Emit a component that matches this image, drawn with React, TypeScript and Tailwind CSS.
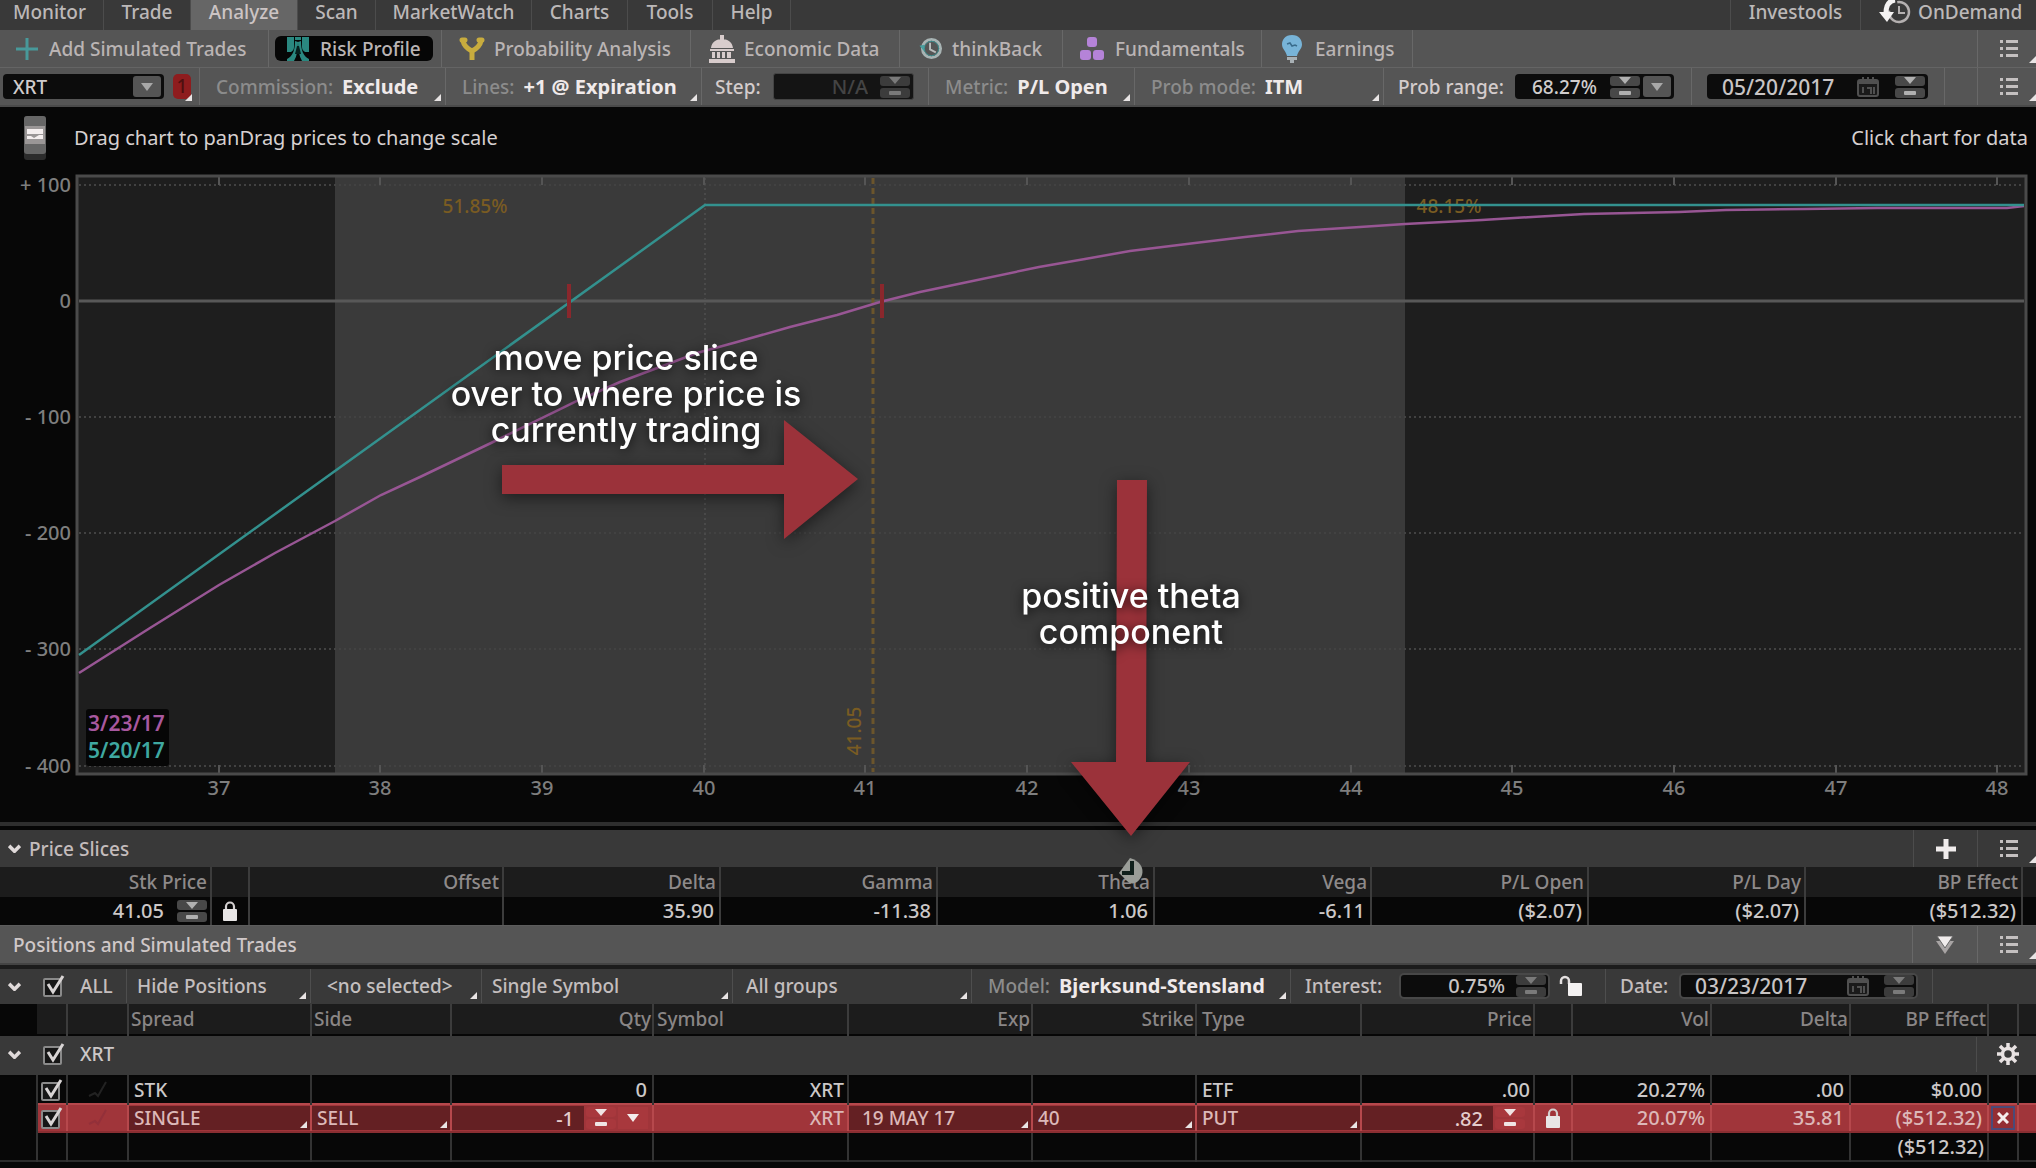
import React from "react";

const AXIS_Y = [
  { y: 185, label: "+ 100" },
  { y: 301, label: "0" },
  { y: 417, label: "- 100" },
  { y: 533, label: "- 200" },
  { y: 649, label: "- 300" },
  { y: 766, label: "- 400" },
];

const AXIS_X = [
  { x: 219, label: "37" },
  { x: 380, label: "38" },
  { x: 542, label: "39" },
  { x: 704, label: "40" },
  { x: 865, label: "41" },
  { x: 1027, label: "42" },
  { x: 1189, label: "43" },
  { x: 1351, label: "44" },
  { x: 1512, label: "45" },
  { x: 1674, label: "46" },
  { x: 1836, label: "47" },
  { x: 1997, label: "48" },
];

/* ---------- small shared pieces ---------- */

function Corner({ className = "" }: { className?: string }) {
  return (
    <svg viewBox="0 0 7 7" className={`pointer-events-none absolute size-[7px] ${className}`} aria-hidden="true">
      <path d="M7 0V7H0Z" fill="#e8e4e4" />
    </svg>
  );
}

function Spinner({ tone = "gray", label }: { tone?: "gray" | "dim" | "red"; label: string }) {
  const bg = tone === "red" ? "bg-[#a8383d]" : tone === "dim" ? "bg-[#3c3c3c]" : "bg-[#484848]";
  const fg = tone === "red" ? "#f0e4e4" : tone === "dim" ? "#7a7a7a" : "#b0b0b0";
  return (
    <span className="flex w-[30px] shrink-0 flex-col gap-[2px]">
      <button aria-label={`${label} up`} className={`flex h-[10px] items-center justify-center rounded-[3px] ${bg}`}>
        <svg viewBox="0 0 12 7" className="h-[7px] w-[12px]"><path d="M0 0H12L6 7Z" fill={fg} /></svg>
      </button>
      <button aria-label={`${label} down`} className={`flex h-[10px] items-center justify-center rounded-[3px] ${bg}`}>
        <svg viewBox="0 0 12 4" className="h-[4px] w-[12px]"><rect width="12" height="4" rx="1" fill={fg} /></svg>
      </button>
    </span>
  );
}

function DropButton({ label }: { label: string }) {
  return (
    <button aria-label={label} className="flex h-[21px] w-[28px] shrink-0 items-center justify-center rounded-[3px] bg-[#555]">
      <svg viewBox="0 0 12 8" className="h-[8px] w-[12px]"><path d="M0 0H12L6 8Z" fill="#a8a8a8" /></svg>
    </button>
  );
}

function ListIcon() {
  return (
    <svg viewBox="0 0 18 20" className="h-[20px] w-[18px]" fill="#c4c0c0" aria-hidden="true">
      <path d="M0 1h3v3H0zM0 8h3v3H0zM0 15h3v3H0zM6 1h12v3H6zM6 8h12v3H6zM6 15h12v3H6z" />
    </svg>
  );
}

function MenuButton({ label, tint }: { label: string; tint: string }) {
  return (
    <button aria-label={label} className={`relative flex w-[59px] shrink-0 items-center border-l pl-[22px] ${tint}`}>
      <ListIcon />
      <Corner className="right-0 bottom-[4px]" />
    </button>
  );
}

function Check({ label }: { label: string }) {
  return (
    <label className="relative block size-[22px] shrink-0">
      <input type="checkbox" defaultChecked aria-label={label} className="absolute bottom-0 left-0 size-[19px] appearance-none rounded-[2px] border-2 border-[#8a8a8a] bg-[#161616]" />
      <svg viewBox="0 0 22 22" className="pointer-events-none absolute inset-0" fill="none" stroke="#d8d4d4" strokeWidth="3">
        <path d="M5 9L10 17L20 1" />
      </svg>
    </label>
  );
}

function Chevron() {
  return (
    <svg viewBox="0 0 14 10" className="h-[9px] w-[13px] shrink-0" fill="none" stroke="#e0dada" strokeWidth="4" aria-hidden="true">
      <path d="M1 2L7 8L13 2" />
    </svg>
  );
}

function Lock({ open = false }: { open?: boolean }) {
  return open ? (
    <svg viewBox="0 0 24 22" className="h-[22px] w-[24px]" aria-hidden="true">
      <path d="M2 9V6a4 4 0 0 1 8 0V9" fill="none" stroke="#e4e0e0" strokeWidth="2.5" />
      <rect x="9" y="8" width="14" height="13" rx="1" fill="#f4f2f2" />
    </svg>
  ) : (
    <svg viewBox="0 0 16 20" className="h-[20px] w-[16px]" aria-hidden="true">
      <path d="M4 9V5.500a4 4 0 0 1 8 0V9" fill="none" stroke="#d4d0d0" strokeWidth="2.200" />
      <rect x="1" y="8" width="14" height="12" rx="1" fill="#e8e6e6" />
    </svg>
  );
}

function Calendar() {
  return (
    <svg viewBox="0 0 22 20" className="h-[20px] w-[22px] shrink-0" aria-hidden="true">
      <rect x="1" y="3" width="20" height="16" rx="2" fill="#1a1a1a" stroke="#505050" strokeWidth="2" />
      <path d="M1 3h20v4H1z" fill="#505050" />
      <path d="M6 0v4M11 0v4M16 0v4M6 10v6M10 11h4v6M17 10v7" stroke="#505050" strokeWidth="2" fill="none" />
    </svg>
  );
}

type MenuProps = { label?: string; value: string; name: string; width: string; bold?: boolean; line: string };

function MenuCell({ label, value, name, width, bold, line }: MenuProps) {
  return (
    <label className={`relative flex shrink-0 items-center gap-[9px] border-r pl-[16px] ${line} ${width}`}>
      {label && <span className="text-[#8c8c8c]">{label}</span>}
      <select aria-label={name} defaultValue={value} className={`appearance-none bg-transparent ${bold ? "text-[20px] font-bold text-[#f0eaea]" : "text-[#c4c0c0]"}`}>
        <option>{value}</option>
      </select>
      <Corner className="right-[4px] bottom-[4px]" />
    </label>
  );
}

/* ---------- top bars ---------- */

const TABS = [
  { t: "Monitor", w: "w-[104px] pr-[4px]" },
  { t: "Trade", w: "w-[87px]" },
  { t: "Analyze", w: "w-[107px]" },
  { t: "Scan", w: "w-[78px]" },
  { t: "MarketWatch", w: "w-[156px]" },
  { t: "Charts", w: "w-[96px]" },
  { t: "Tools", w: "w-[85px]" },
  { t: "Help", w: "w-[78px]" },
];

function TabBar() {
  return (
    <nav className="flex h-[30px] bg-[#393939] text-[#bcb8b8]">
      {TABS.map(({ t, w }) => (
        <button key={t} className={`h-full shrink-0 border-r border-[#4c4c4c] pb-[6px] text-center ${w} ${t === "Analyze" ? "bg-[#666] text-[#ccc4c4]" : ""}`}>
          {t}
        </button>
      ))}
      <span className="flex-1" />
      <a href="#investools" className="w-[130px] shrink-0 border-l border-[#4c4c4c] text-center leading-[24px]">Investools</a>
      <button className="flex w-[176px] shrink-0 items-center gap-[7px] border-l border-[#4c4c4c] pb-[6px] pl-[18px]">
        <svg viewBox="0 0 32 26" className="h-[26px] w-[32px]" fill="none" aria-hidden="true">
          <circle cx="20" cy="13" r="10" stroke="#b4b0b0" strokeWidth="2.500" strokeDasharray="50 13" transform="rotate(-100 20 13)" />
          <path d="M20 7v7h6" stroke="#b4b0b0" strokeWidth="2" />
          <path d="M16 1C9 2 7 8 7 14" stroke="#f4f2f2" strokeWidth="5" />
          <path d="M0 13h15L8 23Z" fill="#f4f2f2" />
        </svg>
        OnDemand
      </button>
    </nav>
  );
}

function ToolIcon({ kind }: { kind: string }) {
  switch (kind) {
    case "plus":
      return (
        <svg viewBox="0 0 22 24" className="h-[24px] w-[22px]"><path d="M9.500 1h3v9.500H22v3H12.500V23h-3V13.500H0v-3h9.500Z" fill="#48999a" /></svg>
      );
    case "risk":
      return (
        <svg viewBox="0 0 26 26" className="h-[26px] w-[26px]" fill="#2a8880">
          <path d="M2 1h7v10C9 13 8 15 6 16H2ZM24 1h-7v10c0 2 1 4 3 5h4Z" />
          <path d="M10 1h6v3h-6Z" />
          <path d="M10 5c0 9-2 15-8 18v2h7c3-5 4-12 4-19ZM16 5c0 9 2 15 8 18v2h-7c-3-5-4-12-4-19Z" />
          <path d="M12 10h2l2 8h-6Z" fill="#06201e" />
        </svg>
      );
    case "prob":
      return (
        <svg viewBox="0 0 26 24" className="h-[24px] w-[26px]" fill="none" stroke="#c8ac3e" strokeLinecap="round">
          <path d="M13 23V14" strokeWidth="5" strokeLinecap="butt" />
          <path d="M4 4c1 5 5 8 9 10c4-2 8-5 9-10" strokeWidth="5" />
          <path d="M3 3h3M20 3h3" strokeWidth="5" />
        </svg>
      );
    case "econ":
      return (
        <svg viewBox="0 0 28 28" className="h-[28px] w-[28px]" fill="#d8cccc">
          <path d="M12 0h4v5h-4zM3 13c1-12 21-12 22 0ZM2 14h24v2H2zM4 17h3v6H4zM9 17h3v6H9zM14 17h3v6h-3zM19 17h4v6h-4zM1 24h26v4H1z" />
        </svg>
      );
    case "think":
      return (
        <svg viewBox="0 0 24 24" className="h-[23px] w-[24px]" fill="none">
          <circle cx="12.500" cy="12" r="9.500" stroke="#a8b4b4" strokeWidth="3" />
          <circle cx="12.500" cy="12" r="7.500" stroke="#3c9090" strokeWidth="1" />
          <path d="M11 6v7l6 3" stroke="#b8bcbc" strokeWidth="2" />
          <path d="M0 9l5-1v7Z" fill="#48a0a0" />
        </svg>
      );
    case "fund":
      return (
        <svg viewBox="0 0 24 25" className="h-[25px] w-[24px]" fill="#b583d8">
          <rect x="7" y="1" width="10" height="10" rx="3" /><rect x="0" y="14" width="11" height="10" rx="3" /><rect x="13" y="14" width="11" height="10" rx="3" />
        </svg>
      );
    default:
      return (
        <svg viewBox="0 0 20 28" className="h-[28px] w-[20px]">
          <path d="M10 0C3 0 0 5 0 9.500C0 14 4 16 5 21h10c1-5 5-7 5-11.500C20 5 17 0 10 0Z" fill="#78b4d8" />
          <path d="M5 22h10v3H5zM8 25h4v3H8z" fill="#a8b0b4" />
          <path d="M5 9l3-1 2 3 3-1 2 1" stroke="#3a6c8c" strokeWidth="1.500" fill="none" />
        </svg>
      );
  }
}

const TOOLS = [
  { t: "Add Simulated Trades", k: "plus", w: "w-[269px] pl-[16px] gap-[11px]" },
  { t: "Probability Analysis", k: "prob", w: "w-[249px] pl-[17px] gap-[9px]" },
  { t: "Economic Data", k: "econ", w: "w-[209px] pl-[17px] gap-[8px]" },
  { t: "thinkBack", k: "think", w: "w-[163px] pl-[19px] gap-[9px]" },
  { t: "Fundamentals", k: "fund", w: "w-[199px] pl-[17px] gap-[11px]" },
  { t: "Earnings", k: "bulb", w: "w-[151px] pl-[20px] gap-[13px]" },
];

function ToolBar() {
  return (
    <div className="flex h-[38px] border-b border-[#646464] bg-[#555] text-[#bab4b4]">
      {TOOLS.map(({ t, k, w }, i) => (
        <React.Fragment key={t}>
          <button className={`flex shrink-0 items-center border-r border-[#686868] ${w}`}>
            <ToolIcon kind={k} />
            {t}
          </button>
          {i === 0 && (
            <span className="flex w-[173px] shrink-0 items-center border-r border-[#686868] pl-[6px]">
              <button className="flex h-[25px] w-[158px] items-center gap-[9px] rounded-[6px] bg-[#060606] pl-[10px]">
                <ToolIcon kind="risk" />
                Risk Profile
              </button>
            </span>
          )}
        </React.Fragment>
      ))}
      <span className="flex-1" />
      <MenuButton label="Toolbar menu" tint="border-[#686868]" />
    </div>
  );
}

function SettingsBar() {
  const line = "border-[#686868]";
  return (
    <div className="flex h-[39px] border-b-2 border-[#4a4a4a] bg-[#555]">
      <span className="relative flex w-[200px] shrink-0 items-center border-r border-[#686868] pl-[3px]">
        <span className="flex h-[25px] w-[161px] items-center rounded-[4px] bg-[#0c0c0c] pr-[3px] pl-[10px]">
          <input aria-label="Symbol" defaultValue="XRT" className="min-w-0 flex-1 bg-transparent text-[#d0cccc]" />
          <DropButton label="Symbol list" />
        </span>
        <button className="ml-[9px] h-[25px] w-[18px] rounded-[5px] bg-[#8e1c1e] text-center leading-[25px] text-[#4e1010]">1</button>
        <Corner className="right-[7px] bottom-[4px]" />
      </span>
      <MenuCell label="Commission:" value="Exclude" name="Commission" bold width="w-[246px]" line={line} />
      <MenuCell label="Lines:" value="+1 @ Expiration" name="Lines" bold width="w-[256px]" line={line} />
      <label className="flex w-[227px] shrink-0 items-center border-r border-[#686868] pl-[13px] text-[#d4cccc]">
        <span className="w-[58px]">Step:</span>
        <span className="flex h-[27px] w-[141px] items-center gap-[12px] rounded-[3px] border border-[#444] bg-[#141414] pr-[3px]">
          <input aria-label="Step" defaultValue="N/A" className="min-w-0 flex-1 bg-transparent text-right text-[20px] text-[#444]" />
          <Spinner tone="dim" label="Step" />
        </span>
      </label>
      <MenuCell label="Metric:" value="P/L Open" name="Metric" bold width="w-[206px]" line={line} />
      <MenuCell label="Prob mode:" value="ITM" name="Prob mode" bold width="w-[249px]" line={line} />
      <label className="flex w-[308px] shrink-0 items-center border-r border-[#686868] pl-[14px] text-[#d4cccc]">
        <span className="w-[117px]">Prob range:</span>
        <span className="flex h-[25px] w-[159px] items-center gap-[3px] rounded-[4px] bg-[#0c0c0c] pr-[3px] pl-[17px]">
          <input aria-label="Prob range" defaultValue="68.27%" className="min-w-0 flex-1 bg-transparent text-[#d0cccc]" />
          <Spinner label="Prob range" />
          <DropButton label="Prob range list" />
        </span>
      </label>
      <label className="flex w-[253px] shrink-0 items-center border-r border-[#686868] pl-[15px]">
        <span className="flex h-[25px] w-[221px] items-center gap-[16px] rounded-[4px] bg-[#0c0c0c] pr-[3px] pl-[15px]">
          <input aria-label="Expiration date" defaultValue="05/20/2017" className="min-w-0 flex-1 bg-transparent text-[21px] text-[#c8c4c4]" />
          <Calendar />
          <Spinner label="Date" />
        </span>
      </label>
      <span className="flex-1" />
      <MenuButton label="Settings menu" tint="border-[#686868]" />
    </div>
  );
}

/* ---------- chart ---------- */

const PURPLE =
  "M79 673L150 628L219 585L275 553L335 521L381 495L420 477L491 443L577 401L620 382L697 353L737 342L790 327L837 315L880 302L920 292L963 283L1039 267L1085 259L1130 251L1195 243L1245 237L1298 231L1360 227L1405 224L1482 220L1532 217L1584 214L1679 212L1726 210L1804 209L1877 208L2007 208L2024 206";

function RiskChart() {
  return (
    <section className="relative bg-[#070707]">
      <div className="flex h-[57px] items-center justify-between pt-[4px] pr-[8px] pl-[24px] text-[20px] font-normal text-[#d6d0d0]">
        <div className="flex items-center gap-[28px]">
          <svg viewBox="0 0 22 44" className="h-[44px] w-[22px]" aria-hidden="true">
            <rect width="22" height="44" rx="3" fill="#2c2c2c" />
            <rect width="22" height="38" rx="3" fill="#666" />
            <rect x="1" y="10" width="20" height="18" fill="#9a9696" />
            <path d="M3 13h16v5H3Z" fill="#f4eeee" />
            <path d="M3 20h4l3 2l5-3h4v4H3Z" fill="#f4eeee" />
          </svg>
          <p>Drag chart to panDrag prices to change scale</p>
        </div>
        <p>Click chart for data</p>
      </div>

      <svg viewBox="0 164 2036 658" className="block h-auto w-full" role="img" aria-label="Risk profile chart">
        <rect x="77" y="175" width="1949" height="599" fill="#1e1e1e" />
        <rect x="335" y="175" width="1070" height="599" fill="#3a3a3a" />
        {AXIS_Y.map(({ y, label }) => (
          <g key={label}>
            <line x1="79" x2="2024" y1={y} y2={y} stroke={label === "0" ? "#585858" : "#424242"} strokeWidth={label === "0" ? 3 : 2} strokeDasharray={label === "0" ? undefined : "2 3"} />
            <text x="71" y={y + 7} textAnchor="end" fill="#7e7e7e" className="text-[20px]">{label}</text>
          </g>
        ))}
        <line x1="705" x2="705" y1="178" y2="772" stroke="#4a4a4a" strokeWidth="2" strokeDasharray="2 3" />
        {AXIS_X.map(({ x, label }) => (
          <g key={label}>
            <path d={`M${x} 177v8M${x} 773v-8`} stroke="#555" strokeWidth="2" />
            <text x={x} y="795" textAnchor="middle" fill="#7e7e7e" className="text-[20px]">{label}</text>
          </g>
        ))}
        <rect x="77" y="176" width="1949" height="598" fill="none" stroke="#4a4a4a" strokeWidth="3" />
        <line x1="873" x2="873" y1="178" y2="772" stroke="#6b552c" strokeWidth="3" strokeDasharray="6 4" />
        <text x="475" y="213" textAnchor="middle" fill="#7a5c22" className="text-[19px]">51.85%</text>
        <text x="1449" y="213" textAnchor="middle" fill="#7a5c22" className="text-[19px]">48.15%</text>
        <text transform="translate(861 731) rotate(-90)" textAnchor="middle" fill="#7a5c22" className="text-[19px]">41.05</text>
        <path d={PURPLE} fill="none" stroke="#985694" strokeWidth="2.500" />
        <path d="M79 655L705 205H2024" fill="none" stroke="#33918e" strokeWidth="2.500" />
        <path d="M569 284v34M882 284v34" stroke="#8a272c" strokeWidth="4" />
        <rect x="86" y="709" width="83" height="57" rx="3" fill="#060606" />
        <text x="88" y="731" fill="#a8589f" className="text-[21px] font-semibold">3/23/17</text>
        <text x="88" y="758" fill="#3fa8a0" className="text-[21px] font-semibold">5/20/17</text>
      </svg>

      {/* Tutorial notes drawn over the chart and the table below it */}
      <div className="pointer-events-none absolute inset-x-0 top-[57px] z-10">
        <svg viewBox="0 164 2036 658" className="block h-auto w-full overflow-visible">
          <path d="M1119 873L1130 858C1140 861 1144 868 1142 875C1139 883 1132 886 1127 881Z" fill="#9a9d98" />
          <path d="M1122 873h10v-12" fill="none" stroke="#10201c" strokeWidth="4" />
          <g fill="#9b323a" className="drop-shadow-[0_4px_8px_rgba(0,0,0,0.5)]">
            <path d="M502 465H784V420L858 479L784 539V494H502Z" />
            <path d="M1117 480H1147L1146 762H1190L1131 836L1071 762H1116Z" />
          </g>
          <g fill="#fff" textAnchor="middle" className="font-['Inter'] text-[34px] font-medium drop-shadow-[0_2px_6px_rgba(0,0,0,0.8)]">
            <text>
              <tspan x="626" y="370">move price slice</tspan>
              <tspan x="626" y="406">over to where price is</tspan>
              <tspan x="626" y="442">currently trading</tspan>
            </text>
            <text>
              <tspan x="1131" y="608">positive theta</tspan>
              <tspan x="1131" y="644">component</tspan>
            </text>
          </g>
        </svg>
      </div>
      <div className="h-[8px] border-t-4 border-[#2e2e2e] bg-[#060606]" />
    </section>
  );
}

/* ---------- price slices ---------- */

const SLICES = [
  { h: "Offset", v: "" },
  { h: "Delta", v: "35.90" },
  { h: "Gamma", v: "-11.38" },
  { h: "Theta", v: "1.06" },
  { h: "Vega", v: "-6.11" },
  { h: "P/L Open", v: "($2.07)" },
  { h: "P/L Day", v: "($2.07)" },
  { h: "BP Effect", v: "($512.32)" },
];

function PriceSlices() {
  return (
    <section>
      <header className="flex h-[37px] bg-[#393939]">
        <button className="flex items-center gap-[8px] pl-[8px] text-[#c4bcbc]"><Chevron />Price Slices</button>
        <span className="flex-1" />
        <button aria-label="Add price slice" className="flex w-[64px] items-center justify-center border-l border-[#4c4c4c]">
          <svg viewBox="0 0 20 20" className="size-[20px]"><path d="M7.500 0h5v7.500H20v5H12.500V20h-5V12.500H0v-5h7.500Z" fill="#f0ecec" /></svg>
        </button>
        <MenuButton label="Price slices menu" tint="border-[#4c4c4c]" />
      </header>
      <table className="w-full table-fixed border-collapse bg-[#070707] text-right">
        <colgroup>
          <col className="w-[211px]" /><col className="w-[38px]" /><col className="w-[254px]" />
          <col className="w-[217px]" /><col className="w-[217px]" /><col className="w-[217px]" />
          <col className="w-[217px]" /><col className="w-[217px]" /><col className="w-[217px]" /><col className="w-[217px]" /><col className="w-[14px]" />
        </colgroup>
        <thead>
          <tr className="h-[30px] bg-[#1c1c1c] text-[#8e8a8a]">
            <th className="border-r-2 border-[#3c3c3c] pr-[3px] font-medium">Stk Price</th>
            <th className="border-r-2 border-[#3c3c3c]" />
            {SLICES.map(({ h }) => <th key={h} className="border-r-2 border-[#3c3c3c] pr-[3px] font-medium">{h}</th>)}
            <th />
          </tr>
        </thead>
        <tbody>
          <tr className="h-[28px] text-[20px] text-[#ccc8c8]">
            <td className="border-r-2 border-[#3c3c3c] pr-[3px]">
              <span className="flex items-center justify-end gap-[13px]">
                <input aria-label="Stock price" defaultValue="41.05" className="w-[80px] bg-transparent text-right" />
                <Spinner label="Stock price" />
              </span>
            </td>
            <td className="border-r-2 border-[#3c3c3c]"><button aria-label="Lock price" className="mx-auto block"><Lock /></button></td>
            {SLICES.map(({ h, v }) => <td key={h} className="border-r-2 border-[#3c3c3c] pr-[5px]">{v}</td>)}
            <td />
          </tr>
        </tbody>
      </table>
    </section>
  );
}

/* ---------- positions ---------- */

function RedSelect({ name, value, pad = "pl-[5px]" }: { name: string; value: string; pad?: string }) {
  return (
    <label className={`relative flex h-[24px] items-center bg-[#642023] ${pad}`}>
      <select aria-label={name} defaultValue={value} className="w-full appearance-none bg-transparent text-[#dcb8b8]"><option>{value}</option></select>
      <Corner className="right-[3px] bottom-[2px]" />
    </label>
  );
}

function Positions() {
  const line = "border-[#4e4e4e]";
  const cell = "border-r-2 border-[#333] p-0";
  const red = "border-y-2 border-r-2 border-t-[#b6484c] border-r-[#b6484c] border-b-[#8a2e32] p-0";
  const head = "border-r-2 border-[#3c3c3c] p-0 font-medium";
  return (
    <section>
      <header className="flex h-[40px] border-t border-b-2 border-t-[#5c5c5c] border-b-[#444] bg-[#555]">
        <h2 className="flex items-center pl-[13px] font-medium text-[#d0c8c8]">Positions and Simulated Trades</h2>
        <span className="flex-1" />
        <button aria-label="Collapse all" className="flex w-[65px] items-center justify-center border-l border-[#686868]">
          <svg viewBox="0 0 18 18" className="size-[18px]"><path d="M0 5h18L9 18Z" fill="#a8a4a4" /><path d="M1 0h16L9 12Z" fill="#f0ecec" stroke="#666" /></svg>
        </button>
        <MenuButton label="Positions menu" tint="border-[#686868]" />
      </header>

      <div className="flex h-[39px] border-t-4 border-[#1c1c1c] bg-[#393939] pb-[1px] text-[#c4bebe]">
        <div className="flex w-[127px] shrink-0 items-center border-r border-[#4e4e4e] pl-[8px]">
          <button aria-label="Toggle all"><Chevron /></button>
          <span className="ml-[22px]"><Check label="All" /></span>
          <span className="ml-[15px]">ALL</span>
        </div>
        <label className={`relative flex w-[184px] shrink-0 items-center border-r pl-[10px] ${line}`}>
          <select aria-label="Position visibility" className="appearance-none bg-transparent"><option>Hide Positions</option></select>
          <Corner className="right-[4px] bottom-[4px]" />
        </label>
        <MenuCell value="<no selected>" name="Account" width="w-[171px]" line={line} />
        <label className={`relative flex w-[251px] shrink-0 items-center border-r pl-[10px] ${line}`}>
          <select aria-label="Symbol scope" className="appearance-none bg-transparent"><option>Single Symbol</option></select>
          <Corner className="right-[4px] bottom-[4px]" />
        </label>
        <label className={`relative flex w-[239px] shrink-0 items-center border-r pl-[13px] ${line}`}>
          <select aria-label="Groups" className="appearance-none bg-transparent"><option>All groups</option></select>
          <Corner className="right-[4px] bottom-[4px]" />
        </label>
        <MenuCell label="Model:" value="Bjerksund-Stensland" name="Model" bold width="w-[319px]" line={line} />
        <label className="flex w-[315px] shrink-0 items-center border-r border-[#4e4e4e] pl-[14px]">
          <span className="w-[94px]">Interest:</span>
          <span className="flex h-[26px] w-[151px] items-center gap-[11px] rounded-[5px] border-2 border-[#484848] bg-[#0c0c0c] pr-[2px]">
            <input aria-label="Interest" defaultValue="0.75%" className="min-w-0 flex-1 bg-transparent text-right text-[20px] text-[#c8c4c4]" />
            <Spinner tone="dim" label="Interest" />
          </span>
          <button aria-label="Unlock interest" className="ml-[9px]"><Lock open /></button>
        </label>
        <label className="flex w-[327px] shrink-0 items-center border-r border-[#4e4e4e] pl-[14px]">
          <span className="w-[59px]">Date:</span>
          <span className="flex h-[26px] w-[239px] items-center gap-[15px] rounded-[5px] border-2 border-[#484848] bg-[#0c0c0c] pr-[2px] pl-[14px]">
            <input aria-label="Model date" defaultValue="03/23/2017" className="min-w-0 flex-1 bg-transparent text-[21px] text-[#c8c4c4]" />
            <Calendar />
            <Spinner tone="dim" label="Model date" />
          </span>
        </label>
      </div>

      <table className="w-full table-fixed border-collapse bg-[#070707] text-right">
        <colgroup>
          <col className="w-[37px]" /><col className="w-[30px]" /><col className="w-[61px]" /><col className="w-[183px]" />
          <col className="w-[140px]" /><col className="w-[202px]" /><col className="w-[195px]" /><col className="w-[184px]" />
          <col className="w-[164px]" /><col className="w-[165px]" /><col className="w-[173px]" /><col className="w-[38px]" />
          <col className="w-[139px]" /><col className="w-[139px]" /><col className="w-[138px]" /><col className="w-[30px]" /><col className="w-[18px]" />
        </colgroup>
        <thead>
          <tr className="h-[31px] bg-[#1c1c1c] text-[#8a8686]">
            <th className="bg-[#070707] p-0" />
            <th className={head} />
            <th className={head} />
            <th className={`${head} pl-[2px] text-left`}>Spread</th>
            <th className={`${head} pl-[2px] text-left`}>Side</th>
            <th className={`${head} pr-[1px]`}>Qty</th>
            <th className={`${head} pl-[3px] text-left`}>Symbol</th>
            <th className={`${head} pr-[1px]`}>Exp</th>
            <th className={`${head} pr-[1px]`}>Strike</th>
            <th className={`${head} pl-[5px] text-left`}>Type</th>
            <th className={`${head} pr-[1px]`}>Price</th>
            <th className={head} />
            <th className={`${head} pr-[1px]`}>Vol</th>
            <th className={`${head} pr-[1px]`}>Delta</th>
            <th className={`${head} pr-[1px]`}>BP Effect</th>
            <th className={head} />
            <th className="p-0" />
          </tr>
        </thead>
        <tbody className="text-[#ccc8c8]">
          <tr className="h-[41px] border-t-2 border-b-2 border-[#060606] bg-[#393939]">
            <td colSpan={17} className="p-0">
              <div className="flex h-[38px] items-center pb-[3px] pl-[8px]">
                <button aria-label="Toggle XRT"><Chevron /></button>
                <span className="ml-[22px]"><Check label="XRT" /></span>
                <span className="ml-[15px]">XRT</span>
                <span className="flex-1" />
                <button aria-label="XRT settings" className="flex h-full w-[60px] items-center border-l border-[#4c4c4c] pl-[19px]">
                  <svg viewBox="-12 -12 24 24" className="size-[24px]" aria-hidden="true">
                    <path d="M0-11V11M-11 0H11M-8-8L8 8M-8 8L8-8" stroke="#e8e2e2" strokeWidth="3.500" />
                    <circle r="5.500" fill="#393939" stroke="#e8e2e2" strokeWidth="3.500" />
                  </svg>
                </button>
              </div>
            </td>
          </tr>
          <tr className="h-[28px]">
            <td className={cell} />
            <td className={`${cell} pl-[3px]`}><Check label="STK" /></td>
            <td className={cell}>
              <svg viewBox="0 0 20 18" className="mx-auto h-[18px] w-[20px]" fill="none" stroke="#222" strokeWidth="2"><path d="M1 15l6-3 3 3 8-14" /></svg>
            </td>
            <td className={`${cell} pl-[5px] text-left`}>STK</td>
            <td className={cell} />
            <td className={`${cell} pr-[5px] text-[20px]`}>0</td>
            <td className={`${cell} pr-[3px]`}>XRT</td>
            <td className={cell} />
            <td className={cell} />
            <td className={`${cell} pl-[5px] text-left`}>ETF</td>
            <td className={`${cell} pr-[3px] text-[20px]`}>.00</td>
            <td className={cell} />
            <td className={`${cell} pr-[5px] text-[20px]`}>20.27%</td>
            <td className={`${cell} pr-[5px] text-[20px]`}>.00</td>
            <td className={`${cell} pr-[5px] text-[20px]`}>$0.00</td>
            <td className={cell} />
            <td className="p-0" />
          </tr>
          <tr className="h-[28px] bg-[#a0353a] text-[#dcb8b8]">
            <td className="border-r-2 border-[#333] bg-[#070707] p-0" />
            <td className={`${red} pl-[3px]`}><Check label="SINGLE" /></td>
            <td className={red}>
              <svg viewBox="0 0 20 18" className="mx-auto h-[18px] w-[20px]" fill="none" stroke="#93303a" strokeWidth="2"><path d="M1 15l6-3 3 3 8-14" /></svg>
            </td>
            <td className={red}><RedSelect name="Spread" value="SINGLE" /></td>
            <td className={red}><RedSelect name="Side" value="SELL" /></td>
            <td className={red}>
              <span className="flex h-[24px] items-center justify-end gap-[2px]">
                <input aria-label="Quantity" defaultValue="-1" className="h-full min-w-0 flex-1 bg-[#642023] pr-[10px] text-right text-[20px] text-[#e4cccc]" />
                <Spinner tone="red" label="Quantity" />
                <button aria-label="Quantity list" className="mr-[4px] flex h-[22px] w-[30px] items-center justify-center bg-[#a8383d]">
                  <svg viewBox="0 0 12 8" className="h-[8px] w-[12px]"><path d="M0 0H12L6 8Z" fill="#f4ecec" /></svg>
                </button>
              </span>
            </td>
            <td className={`${red} pr-[3px]`}>XRT</td>
            <td className={red}><RedSelect name="Expiration" value="19 MAY 17" pad="pl-[13px]" /></td>
            <td className={red}><RedSelect name="Strike" value="40" /></td>
            <td className={red}><RedSelect name="Type" value="PUT" /></td>
            <td className={red}>
              <span className="flex h-[24px] items-center justify-end gap-[2px] pr-[8px]">
                <input aria-label="Price" defaultValue=".82" className="h-full min-w-0 flex-1 bg-[#642023] pr-[10px] text-right text-[20px] text-[#e4cccc]" />
                <Spinner tone="red" label="Price" />
              </span>
            </td>
            <td className={red}><button aria-label="Lock trade price" className="mx-auto block"><Lock /></button></td>
            <td className={`${red} pr-[5px] text-[20px]`}>20.07%</td>
            <td className={`${red} pr-[5px] text-[20px]`}>35.81</td>
            <td className={`${red} pr-[5px] text-[20px]`}>($512.32)</td>
            <td className={red}>
              <button aria-label="Remove trade" className="mx-auto flex size-[24px] items-center justify-center border-2 border-[#4a4a78] bg-[#942e34]">
                <svg viewBox="0 0 12 12" className="size-[12px]" stroke="#f4ecec" strokeWidth="3"><path d="M1 1L11 11M11 1L1 11" /></svg>
              </button>
            </td>
            <td className="border-y-2 border-t-[#b6484c] border-b-[#8a2e32] p-0" />
          </tr>
          <tr className="h-[29px] border-b-2 border-[#2c2c2c]">
            {Array.from({ length: 14 }, (_, i) => <td key={i} className={cell} />)}
            <td className={`${cell} pr-[3px] text-[20px]`}>($512.32)</td>
            <td className={cell} />
            <td className="p-0" />
          </tr>
        </tbody>
      </table>
    </section>
  );
}

export default function App() {
  return (
    <main className="min-h-screen overflow-hidden bg-[#070707] font-['Noto_Sans','Open_Sans',sans-serif] text-[19px] leading-[24px] font-medium whitespace-nowrap text-[#c4c0c0]">
      <TabBar />
      <ToolBar />
      <SettingsBar />
      <RiskChart />
      <PriceSlices />
      <Positions />
    </main>
  );
}
